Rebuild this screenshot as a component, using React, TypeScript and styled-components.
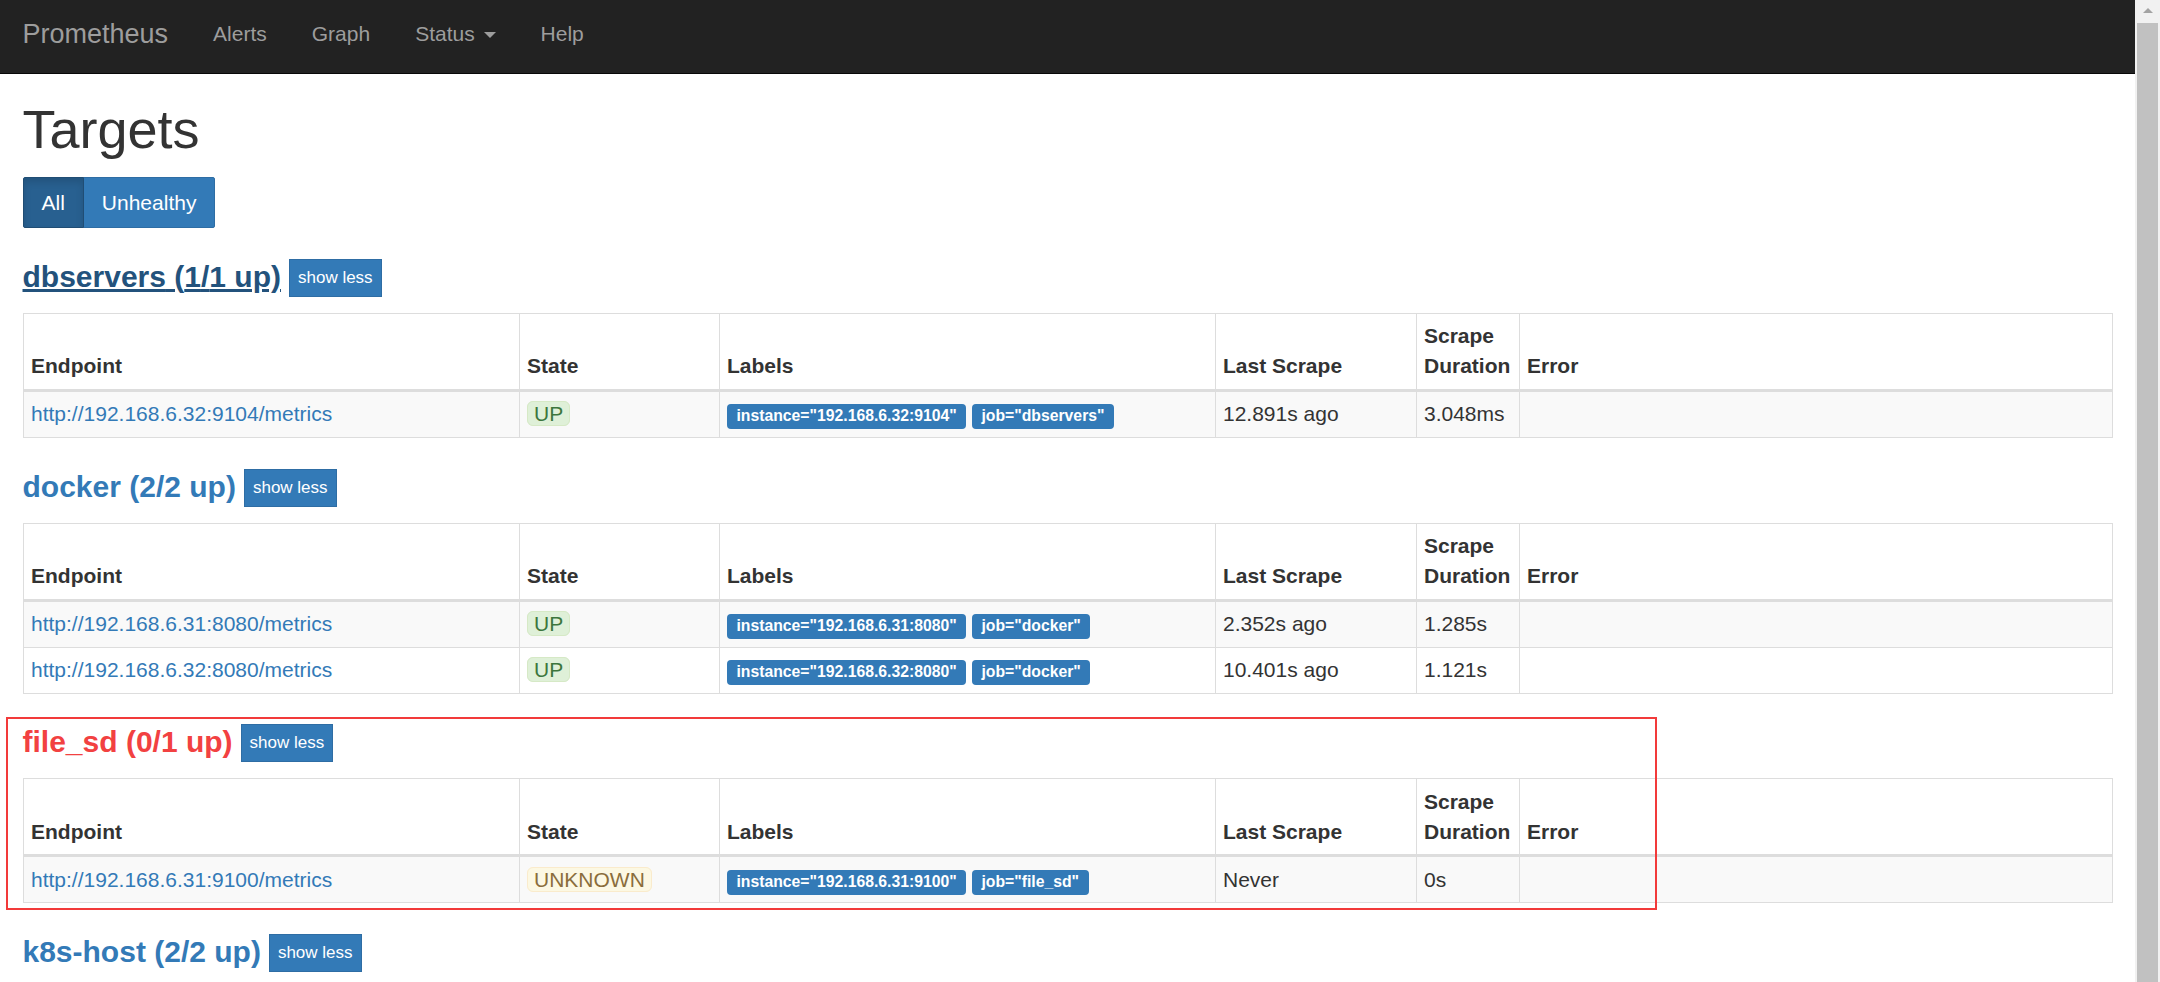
import { createGlobalStyle, css, styled } from "styled-components";

type Health = "up" | "unknown";

type Target = {
  endpoint: string;
  state: Health;
  labels: string[];
  lastScrape: string;
  duration: string;
  error?: string;
};

type Job = {
  name: string;
  up: number;
  total: number;
  visited?: boolean;
  flagged?: boolean;
  targets: Target[];
};

// k8s-host sits at the bottom edge of the window, only its header is in view
const jobs: Job[] = [
  {
    name: "dbservers",
    up: 1,
    total: 1,
    visited: true,
    targets: [
      {
        endpoint: "http://192.168.6.32:9104/metrics",
        state: "up",
        labels: ['instance="192.168.6.32:9104"', 'job="dbservers"'],
        lastScrape: "12.891s ago",
        duration: "3.048ms",
      },
    ],
  },
  {
    name: "docker",
    up: 2,
    total: 2,
    targets: [
      {
        endpoint: "http://192.168.6.31:8080/metrics",
        state: "up",
        labels: ['instance="192.168.6.31:8080"', 'job="docker"'],
        lastScrape: "2.352s ago",
        duration: "1.285s",
      },
      {
        endpoint: "http://192.168.6.32:8080/metrics",
        state: "up",
        labels: ['instance="192.168.6.32:8080"', 'job="docker"'],
        lastScrape: "10.401s ago",
        duration: "1.121s",
      },
    ],
  },
  {
    name: "file_sd",
    up: 0,
    total: 1,
    flagged: true,
    targets: [
      {
        endpoint: "http://192.168.6.31:9100/metrics",
        state: "unknown",
        labels: ['instance="192.168.6.31:9100"', 'job="file_sd"'],
        lastScrape: "Never",
        duration: "0s",
      },
    ],
  },
  {
    name: "k8s-host",
    up: 2,
    total: 2,
    targets: [],
  },
];

const GlobalStyle = createGlobalStyle`
  html, body {
    margin: 0;
    padding: 0;
    height: 100%;
    overflow: hidden;
  }
  body {
    font-family: "Liberation Sans", Arial, Helvetica, sans-serif;
    font-size: 21px;
    line-height: 30px;
    color: #333;
    background: #fff;
  }
  * {
    box-sizing: border-box;
  }
`;

const Viewport = styled.div`
  display: flex;
  height: 100vh;
`;

const Page = styled.div`
  flex: 1;
  min-width: 0;
  overflow: hidden;
`;

const Navbar = styled.nav`
  display: flex;
  align-items: center;
  height: 74px;
  padding: 0 22.5px 6px;
  background: #222;
  border-bottom: 1px solid #080808;
`;

const Brand = styled.a`
  margin-right: 22.5px;
  font-size: 27px;
  line-height: 30px;
  color: #9d9d9d;
  text-decoration: none;
`;

const NavLink = styled.a`
  padding: 0 22.5px;
  font-size: 21px;
  line-height: 30px;
  color: #9d9d9d;
  text-decoration: none;
  white-space: nowrap;
`;

const Caret = styled.span`
  display: inline-block;
  width: 0;
  height: 0;
  margin-left: 3px;
  vertical-align: middle;
  border-top: 6px solid;
  border-left: 6px solid transparent;
  border-right: 6px solid transparent;
`;

const Container = styled.main`
  padding: 0 22.5px;
`;

const Title = styled.h1`
  margin: 26px 0 17.6px;
  font-size: 54px;
  font-weight: 500;
  line-height: 59.4px;
`;

const FilterGroup = styled.div`
  display: flex;
`;

const FilterButton = styled.button<{ $active?: boolean }>`
  height: 51px;
  padding: 0 18px;
  font-family: inherit;
  font-size: 21px;
  line-height: 49px;
  color: #fff;
  background: #337ab7;
  border: 1px solid #2e6da4;
  border-radius: 0;
  cursor: pointer;

  & + & {
    margin-left: -1px;
  }
  &:first-child {
    border-radius: 2px 0 0 2px;
  }
  &:last-child {
    border-radius: 0 2px 2px 0;
  }

  ${(p) =>
    p.$active &&
    css`
      position: relative;
      z-index: 1;
      background: #286090;
      border-color: #204d74;
      box-shadow: inset 0 4.5px 7.5px rgba(0, 0, 0, 0.125);
    `}
`;

const Section = styled.section<{ $flagged?: boolean }>`
  position: relative;
  margin-top: 30.8px;

  ${(p) =>
    p.$flagged &&
    css`
      &::after {
        content: "";
        position: absolute;
        top: -7px;
        bottom: -7px;
        left: -17px;
        width: 1647px;
        border: 2px solid #f23a3a;
        pointer-events: none;
      }
    `}
`;

const JobHeader = styled.h2`
  display: flex;
  align-items: flex-start;
  gap: 8px;
  height: 38px;
  margin: 0 0 16px;
`;

const JobLink = styled.a<{ $tone: "normal" | "visited" | "danger" }>`
  margin-top: 3px;
  font-size: 30px;
  font-weight: bold;
  line-height: 30px;
  text-decoration: none;
  color: #337ab7;

  ${(p) =>
    p.$tone === "visited" &&
    css`
      color: #23527c;
      text-decoration: underline;
    `}
  ${(p) =>
    p.$tone === "danger" &&
    css`
      color: #f24141;
    `}
`;

const ShowLess = styled.button`
  height: 38px;
  padding: 0 8px;
  font-family: inherit;
  font-size: 17px;
  line-height: 36px;
  color: #fff;
  background: #337ab7;
  border: 1px solid #2e6da4;
  border-radius: 0;
  cursor: pointer;
`;

const Table = styled.table`
  width: 100%;
  table-layout: fixed;
  border-collapse: collapse;
  border: 1px solid #ddd;
`;

const Col = styled.col<{ $w?: number }>`
  width: ${(p) => (p.$w ? `${p.$w}px` : "auto")};
`;

const Th = styled.th`
  padding: 7.5px;
  text-align: left;
  vertical-align: bottom;
  font-weight: bold;
  line-height: 30px;
  border: 1px solid #ddd;
  border-bottom: 3px solid #ddd;
`;

const Row = styled.tr`
  &:nth-child(odd) {
    background: #f9f9f9;
  }
`;

const Td = styled.td`
  padding: 7.5px;
  vertical-align: top;
  line-height: 30px;
  border: 1px solid #ddd;
  white-space: nowrap;
`;

const Endpoint = styled.a`
  color: #337ab7;
  text-decoration: none;
`;

const StateBadge = styled.span<{ $state: Health }>`
  padding: 0 6px;
  border: 1px solid;
  border-radius: 6px;

  ${(p) =>
    p.$state === "up"
      ? css`
          color: #3c763d;
          background: #dff0d8;
          border-color: #d6e9c6;
        `
      : css`
          color: #8a6d3b;
          background: #fcf8e3;
          border-color: #faebcc;
        `}
`;

const LabelChip = styled.span`
  padding: 0.2em 0.6em 0.3em;
  font-size: 75%;
  font-weight: bold;
  line-height: 1;
  color: #fff;
  background: #337ab7;
  border-radius: 0.25em;
  white-space: nowrap;
`;

const Rail = styled.div`
  flex: none;
  display: flex;
  flex-direction: column;
  width: 25px;
  background: #f1f1f1;
`;

const RailArrow = styled.div`
  display: flex;
  justify-content: center;
  height: 23px;
  padding-top: 8px;

  &::before {
    content: "";
    width: 0;
    height: 0;
    border-left: 5.5px solid transparent;
    border-right: 5.5px solid transparent;
    border-bottom: 5.5px solid #a3a3a3;
  }
`;

const RailThumb = styled.div`
  flex: 1;
  margin: 0 2px;
  background: #c1c1c1;
`;

function TargetTable({ targets }: { targets: Target[] }) {
  return (
    <Table>
      <colgroup>
        <Col $w={496} />
        <Col $w={200} />
        <Col $w={496} />
        <Col $w={201} />
        <Col $w={103} />
        <Col />
      </colgroup>
      <thead>
        <tr>
          <Th>Endpoint</Th>
          <Th>State</Th>
          <Th>Labels</Th>
          <Th>Last Scrape</Th>
          <Th>Scrape Duration</Th>
          <Th>Error</Th>
        </tr>
      </thead>
      <tbody>
        {targets.map((t) => (
          <Row key={t.endpoint}>
            <Td>
              <Endpoint href={t.endpoint}>{t.endpoint}</Endpoint>
            </Td>
            <Td>
              <StateBadge $state={t.state}>{t.state.toUpperCase()}</StateBadge>
            </Td>
            <Td>
              {t.labels.map((l, i) => (
                <span key={l}>
                  {i > 0 ? " " : null}
                  <LabelChip>{l}</LabelChip>
                </span>
              ))}
            </Td>
            <Td>{t.lastScrape}</Td>
            <Td>{t.duration}</Td>
            <Td>{t.error ?? ""}</Td>
          </Row>
        ))}
      </tbody>
    </Table>
  );
}

function JobSection({ job }: { job: Job }) {
  const tone = job.up < job.total ? "danger" : job.visited ? "visited" : "normal";
  return (
    <Section $flagged={job.flagged}>
      <JobHeader>
        <JobLink href={`#job-${job.name}`} $tone={tone}>
          {job.name} ({job.up}/{job.total} up)
        </JobLink>
        <ShowLess type="button">show less</ShowLess>
      </JobHeader>
      {job.targets.length > 0 ? <TargetTable targets={job.targets} /> : null}
    </Section>
  );
}

export default function App() {
  return (
    <>
      <GlobalStyle />
      <Viewport>
        <Page>
          <Navbar>
            <Brand href="#">Prometheus</Brand>
            <NavLink href="#">Alerts</NavLink>
            <NavLink href="#">Graph</NavLink>
            <NavLink href="#">
              Status{" "}
              <Caret />
            </NavLink>
            <NavLink href="#">Help</NavLink>
          </Navbar>
          <Container>
            <Title>Targets</Title>
            <FilterGroup>
              <FilterButton $active>All</FilterButton>
              <FilterButton>Unhealthy</FilterButton>
            </FilterGroup>
            {jobs.map((job) => (
              <JobSection key={job.name} job={job} />
            ))}
          </Container>
        </Page>
        <Rail>
          <RailArrow />
          <RailThumb />
        </Rail>
      </Viewport>
    </>
  );
}
